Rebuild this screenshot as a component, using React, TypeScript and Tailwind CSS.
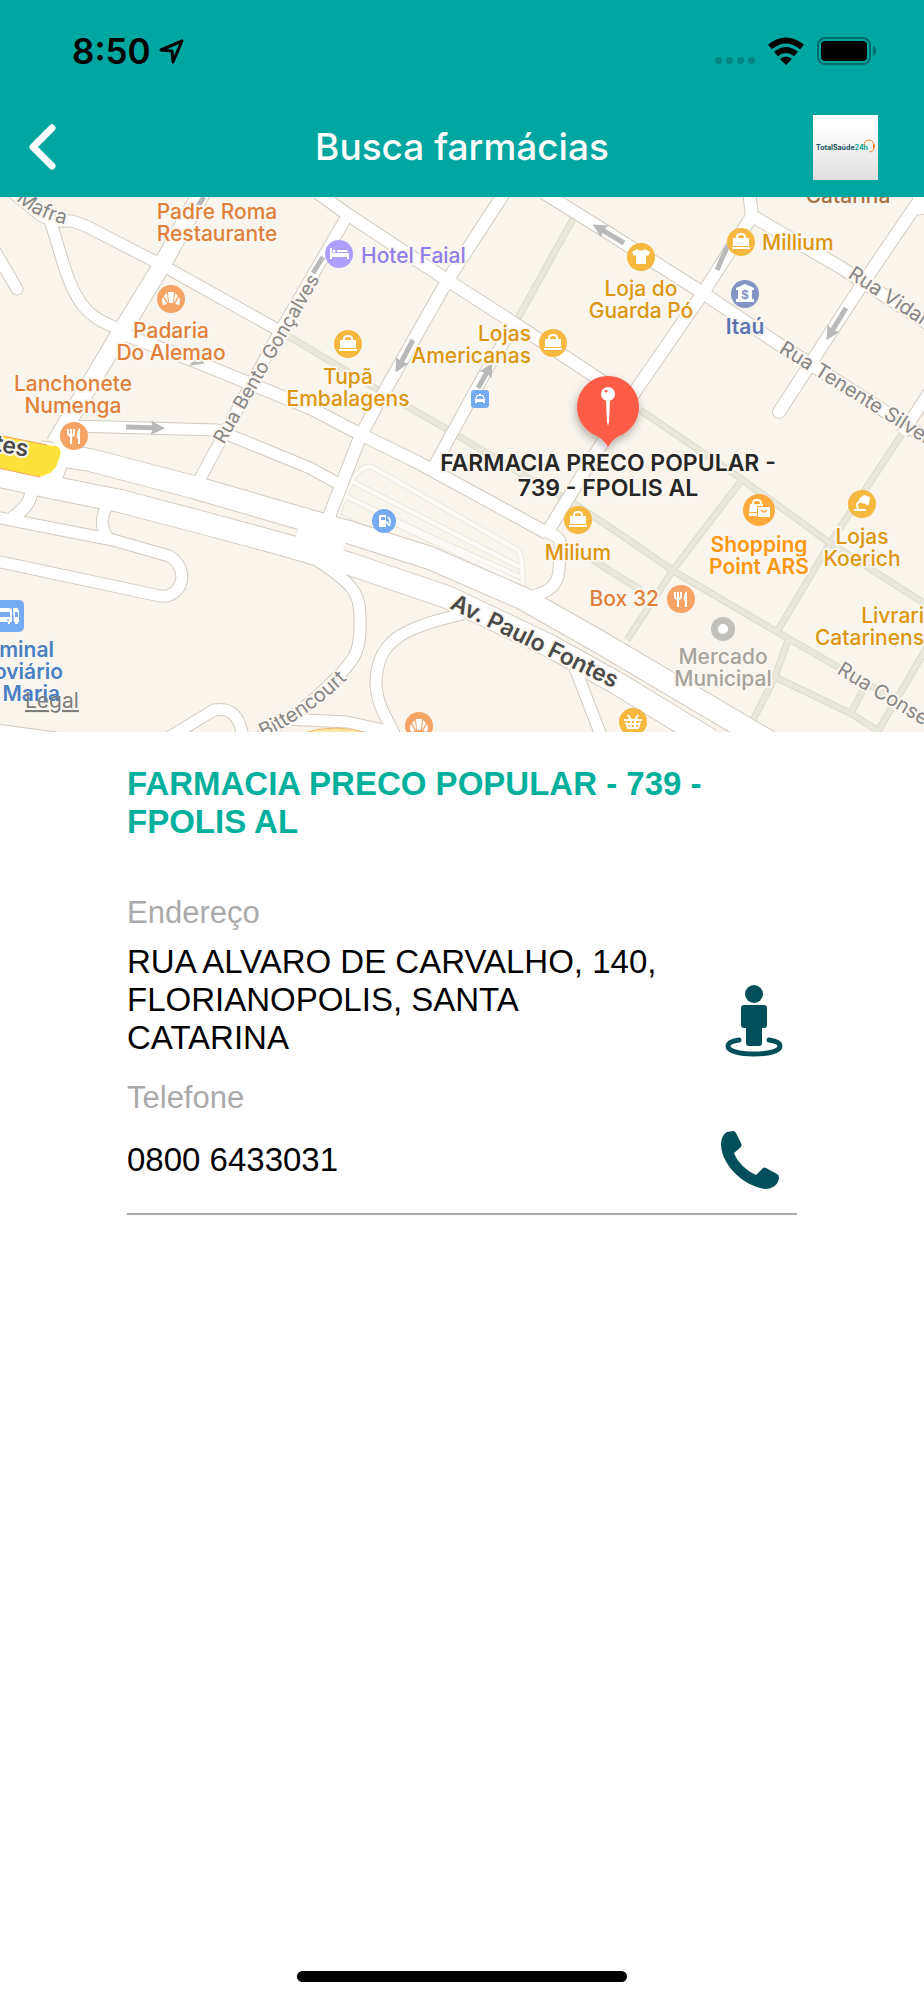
import React from 'react';

const roads = [
  { d: 'M203 190 L162 265 L118 337 L55 443', w: 17 },
  { d: 'M55 443 L60 460 L50 487', w: 17 },
  { d: 'M10 190 L40 215 L52 221 L72 221 L86 226 L160 264 L280 331', w: 11 },
  { d: 'M50 221 C60 248 66 285 84 307 C94 319 104 322 120 330', w: 11 },
  { d: 'M-4 253 L17 289', w: 11, round: true },
  { d: 'M120 333 L197 362 L310 408 L362 435 L417 462 L547 533', w: 12 },
  { d: 'M74 426 L217 430 L310 468 L337 483', w: 11 },
  { d: 'M346 218 L278 335 L197 484', w: 11 },
  { d: 'M318 193 L347 214 L447 280 L517 325 L614 389', w: 12 },
  { d: 'M506 190 L447 281 L378 403 L360 437 L327 522', w: 12 },
  { d: 'M516 323 L490 364 L434 466', w: 11 },
  { d: 'M544 193 L610 234 L703 293 L777 343 L930 440', w: 12 },
  { d: 'M749 190 L752 216 L703 293 L638 387 L587 467 L547 533', w: 12 },
  { d: 'M752 216 L840 267 L930 325', w: 12 },
  { d: 'M932 182 L863 283 L779 412', w: 12, round: true },
  { d: 'M914 206 L932 203', w: 18 },
  { d: 'M932 388 L902 434', w: 11 },
  { d: 'M547 532 C563 538 560 542 560 550 L559 570 C558 588 545 594 522 599', w: 11 },
  { d: 'M40 452 L90 460 L193 487 L310 521 L345 531 L430 558 L522 598 L598 641 L752 732 L790 754', w: 22 },
  { d: 'M-4 475 L50 487 L120 501 L200 522 L285 545 L350 564 L447 597 L550 646 L615 682 L710 740', w: 22 },
  { d: 'M297 532 L345 545', w: 22 },
  { d: 'M32 490 C30 502 26 508 12 518', w: 12 },
  { d: 'M106 508 C101 518 100 527 108 538', w: 11 },
  { d: 'M-4 517 L113 540 L169 556 C192 570 181 599 160 596 L-4 561', w: 11 },
  { d: 'M318 561 C350 582 360 592 360 615 C361 650 358 658 330 684 C305 710 285 720 256 740', w: 11 },
  { d: 'M463 614 C400 628 376 642 376 685 C377 705 386 716 396 738', w: 11 },
  { d: 'M284 719 L347 722 L392 732', w: 11 },
  { d: 'M168 738 L214 710 C230 707 240 715 243 738', w: 11 },
  { d: 'M-4 730 L56 738', w: 11 },
  { d: 'M575 668 L602 738', w: 11 },
];

const paths = [
  'M284 334 L300 343 L375 388 L445 428 L520 473 L573 503 L620 534 L675 572 L777 632 L930 720',
  'M573 219 L517 320',
  'M640 410 L733 473 L830 543 L930 607',
  'M902 434 L830 543 L777 632',
  'M741 481 L673 570 L627 640',
  'M586 555 L610 571 L641 590',
  'M788 640 L775 677 L751 724',
  'M775 677 L850 713 L880 732',
  'M864 688 L851 713',
  'M930 642 L874 738',
];

const lanes = [
  'M336 518 L352 480 C358 471 364 465 372 467 L516 549 C522 552 521 560 522 566 L523 590',
  'M353 482 L520 567',
  'M347 497 L420 532 L520 577',
  'M337 515 L372 532',
  'M388 520 L520 583',
];

const arrows = [
  { x: 126, y: 427, x2: 160, y2: 428 },
  { x: 413, y: 340, x2: 398, y2: 368 },
  { x: 478, y: 388, x2: 490, y2: 367 },
  { x: 624, y: 243, x2: 597, y2: 227 },
  { x: 846, y: 308, x2: 829, y2: 336 },
  { x: 185, y: 357, x2: 200, y2: 362 },
];

type Label = {
  x: number;
  y: number;
  lines: string[];
  color: string;
  anchor?: 'start' | 'middle' | 'end';
  bold?: boolean;
};

const ORANGE = '#e0803a';
const GOLD = '#dc960f';

const labels: Label[] = [
  { x: 217, y: 219, lines: ['Padre Roma', 'Restaurante'], color: ORANGE },
  { x: 171, y: 338, lines: ['Padaria', 'Do Alemao'], color: ORANGE },
  { x: 73, y: 391, lines: ['Lanchonete', 'Numenga'], color: ORANGE },
  { x: 348, y: 384, lines: ['Tupã', 'Embalagens'], color: GOLD },
  { x: 361, y: 263, lines: ['Hotel Faial'], color: '#8f7ee8', anchor: 'start' },
  { x: 531, y: 341, lines: ['Lojas', 'Americanas'], color: GOLD, anchor: 'end' },
  { x: 641, y: 296, lines: ['Loja do', 'Guarda Pó'], color: GOLD },
  { x: 762, y: 250, lines: ['Millium'], color: GOLD, anchor: 'start' },
  { x: 745, y: 334, lines: ['Itaú'], color: '#5a74b2', bold: true },
  { x: 848, y: 203, lines: ['Catarina'], color: '#a9713f' },
  { x: 578, y: 560, lines: ['Milium'], color: GOLD },
  { x: 759, y: 552, lines: ['Shopping', 'Point ARS'], color: '#fd9610', bold: true },
  { x: 862, y: 544, lines: ['Lojas', 'Koerich'], color: GOLD },
  { x: 659, y: 606, lines: ['Box 32'], color: ORANGE, anchor: 'end' },
  { x: 924, y: 623, lines: ['Livrari', 'Catarinens'], color: GOLD, anchor: 'end' },
  { x: 723, y: 664, lines: ['Mercado', 'Municipal'], color: '#a5a39d' },
  { x: 54, y: 657, lines: ['minal'], color: '#4a7fc3', anchor: 'end', bold: true },
  { x: 63, y: 679, lines: ['oviário'], color: '#4a7fc3', anchor: 'end', bold: true },
  { x: 60, y: 701, lines: ['Maria'], color: '#4a7fc3', anchor: 'end', bold: true },
];

const Bag = () => (
  <>
    <path d="M-4 -3 V-5 Q-4 -8 0 -8 Q4 -8 4 -5 V-3" fill="none" stroke="#fff" strokeWidth="2" />
    <path d="M-8 -4 H8 V4 H-8 Z M-9 5 H9 V7 H-9 Z" fill="#fff" />
  </>
);

const Cutlery = () => (
  <>
    <path d="M-6 -7 V-3 Q-6 0 -3 0 Q0 0 0 -3 V-7 M-3 -7 V8" fill="none" stroke="#fff" strokeWidth="2" />
    <path d="M6 -8 Q2 -5 3 2 H4 V8 H6 Z" fill="#fff" />
  </>
);

const Croissant = () => (
  <>
    <path d="M-3 -7 H3 L2 4 H-2 Z" fill="#fff" />
    <path d="M-4 -6 L-7 -3 L-3 4 Z M4 -6 L7 -3 L3 4 Z" fill="#fff" />
    <path d="M-8 -2 Q-10 2 -8 6 L-4 5 Z M8 -2 Q10 2 8 6 L4 5 Z" fill="#fff" />
  </>
);

type PoiProps = { x: number; y: number; color: string; r?: number; children: React.ReactNode };

const Poi: React.FC<PoiProps> = ({ x, y, color, r = 14, children }) => (
  <g transform={`translate(${x} ${y})`}>
    <circle r={r} fill={color} />
    {children}
  </g>
);

const Map = () => {
  const halo = { stroke: '#fbf7f0', strokeWidth: 4, paintOrder: 'stroke', strokeLinejoin: 'round' } as const;
  return (
    <svg viewBox="0 197 924 535" className="block w-full h-auto bg-[#f9f5ed] font-['Inter',sans-serif]" role="img" aria-label="Mapa">
      <defs>
        <marker id="head" viewBox="0 0 14 14" refX="9" refY="7" markerWidth="14" markerHeight="14" markerUnits="userSpaceOnUse" orient="auto">
          <path d="M0 0 L14 7 L0 14 L2 7 Z" fill="#b9b9b9" />
        </marker>
        <filter id="shadow" x="-50%" y="-50%" width="200%" height="200%">
          <feDropShadow dx="-1" dy="4" stdDeviation="4" floodOpacity="0.3" />
        </filter>
        <path id="mafra" d="M16 200 Q40 222 80 227" />
        <path id="bittencourt" d="M263 738 Q316 714 362 664" />
      </defs>

      {/* streets */}
      <g fill="none">
        {paths.map((d) => <path key={d} d={d} stroke="#dcdbca" strokeWidth="7" />)}
        {paths.map((d) => <path key={d} d={d} stroke="#e9e8dc" strokeWidth="5" />)}
        {lanes.map((d) => <path key={d} d={d} stroke="#e9e6de" strokeWidth="6" />)}
        {lanes.map((d) => <path key={d} d={d} stroke="#fcfaf6" strokeWidth="4" />)}
        {roads.map((r) => (
          <path key={r.d} d={r.d} stroke="#d3cabf" strokeWidth={r.w + 2} strokeLinejoin="round" strokeLinecap={r.round ? 'round' : 'butt'} />
        ))}
        {roads.map((r) => (
          <path key={r.d} d={r.d} stroke="#fff" strokeWidth={r.w} strokeLinejoin="round" strokeLinecap={r.round ? 'round' : 'butt'} />
        ))}
      </g>
      <path d="M-2 435 L47 445 L56 446 Q62 448 60 456 L56 467 L50 473 L40 477 L-2 468 Z" fill="#ffe13c" />
      <path d="M-2 435 L47 445 M40 477 L-2 468" stroke="#fba060" strokeWidth="1" />
      <path d="M300 734 Q335 722 370 734" fill="#ffe7a8" stroke="#f6b76a" />

      <g stroke="#b9b9b9" strokeWidth="5">
        {arrows.map((a) => (
          <line key={a.x} x1={a.x} y1={a.y} x2={a.x2} y2={a.y2} markerEnd="url(#head)" />
        ))}
        <path d="M728 245 L717 270 M323 257 L313 273 M204 197 L198 206" />
      </g>

      {/* street names */}
      <g fontSize="20" fill="#858585" {...halo}>
        <text><textPath href="#mafra">Mafra</textPath></text>
        <text><textPath href="#bittencourt">Bittencourt</textPath></text>
        <text fontSize="19" transform="translate(224 445) rotate(-60)">Rua Bento Gonçalves</text>
        <text transform="translate(847 277) rotate(33)">Rua Vidal</text>
        <text transform="translate(778 352) rotate(32)">Rua Tenente Silvei</text>
        <text transform="translate(836 673) rotate(31)">Rua Conse</text>
      </g>
      <g fontSize="23" fontWeight="600" fill="#4a4a4a" {...halo}>
        <text transform="translate(449 608) rotate(26)">Av. Paulo Fontes</text>
        <text transform="translate(27 457) rotate(11)" textAnchor="end">tes</text>
      </g>

      {/* places */}
      {labels.map((l) => (
        <text key={`${l.x}-${l.y}`} fontSize="21" fontWeight={l.bold ? 600 : 500} fill={l.color} textAnchor={l.anchor ?? 'middle'} {...halo}>
          {l.lines.map((line, i) => (
            <tspan key={line} x={l.x} y={l.y + i * 22}>{line}</tspan>
          ))}
        </text>
      ))}

      <Poi x={171} y={299} color="#f6a465"><Croissant /></Poi>
      <Poi x={419} y={726} color="#f6a465"><Croissant /></Poi>
      <Poi x={74} y={436} color="#f6a465"><Cutlery /></Poi>
      <Poi x={681} y={599} color="#f6a465"><Cutlery /></Poi>
      <Poi x={348} y={344} color="#f6b83f"><Bag /></Poi>
      <Poi x={553} y={343} color="#f6b83f"><Bag /></Poi>
      <Poi x={741} y={242} color="#f6b83f"><Bag /></Poi>
      <Poi x={578} y={520} color="#f6b83f"><Bag /></Poi>
      <Poi x={339} y={254} color="#ae9fff">
        <path d="M-8 -6 V5 M-8 2 H9 M9 5 V-1" stroke="#fff" strokeWidth="2" fill="none" />
        <path d="M-7 -1 H10 V2 H-7 Z M-2 -4 H7 Q9 -4 9 -2 H-2 Z" fill="#fff" />
        <circle cx="-5" cy="-3" r="1.5" fill="#fff" />
      </Poi>
      <Poi x={641} y={257} color="#f6b83f">
        <path d="M-4 -8 Q0 -5 4 -8 L9 -5 L7 -1 L5 -2 V7 H-5 V-2 L-7 -1 L-9 -5 Z" fill="#fff" />
      </Poi>
      <Poi x={745} y={294} color="#8595c3">
        <path d="M0 -10 L9 -6 V-4 H7 V5 H9 V8 H-9 V5 H-7 V-4 H-9 V-6 Z" fill="#fff" />
        <text y="5" textAnchor="middle" fontSize="12" fontWeight="700" fill="#8595c3">$</text>
      </Poi>
      <Poi x={384} y={521} color="#75abf0" r={12}>
        <path d="M-5 -6 H2 V6 H-5 Z" fill="#fff" />
        <path d="M-3 -4 H1 V-1 H-3 Z" fill="#75abf0" />
        <path d="M2 1 Q4 1 4 3 Q6 6 6 2 V-1 L4 -4" stroke="#fff" strokeWidth="1.5" fill="none" />
      </Poi>
      <Poi x={759} y={510} color="#feab3c" r={16}>
        <path d="M-6 -5 V-7 Q-6 -10 -2 -10 Q2 -10 2 -7 V-5" stroke="#fff" strokeWidth="2" fill="none" />
        <path d="M-9 -6 H4 V-4 H-2 V2 H-10 Z M-10 3 H-2 V6 H-10 Z M-1 -3 H11 V7 H-1 Z" fill="#fff" />
        <path d="M2 0 Q5 4 8 0" stroke="#feab3c" strokeWidth="1.5" fill="none" />
      </Poi>
      <Poi x={862} y={504} color="#f6b83f">
        <path d="M-3 -5 L2 -9 L8 -7 L7 0 L5 2 L4 0 L-1 -1 Z" fill="#fff" />
        <path d="M-1 -4 L-5 0 L-4 6 M-8 6 H4" stroke="#fff" strokeWidth="2" fill="none" />
      </Poi>
      <Poi x={633} y={722} color="#f6b83f">
        <path d="M-9 -2 H9 M-7 0 L-5 6 H5 L7 0 M-5 -7 L-2 -2 M5 -7 L2 -2 M-7 2 H7 M-2 -2 V6 M2 -2 V6" stroke="#fff" strokeWidth="2" fill="none" />
      </Poi>
      <Poi x={723} y={629} color="#c2c0ba" r={12}><circle r="5" fill="#fff" /></Poi>

      {/* transit stops */}
      <g transform="translate(480 399)">
        <rect x="-9" y="-9" width="18" height="18" rx="3" fill="#75abf0" />
        <path d="M-1 -5 H1 V-4 H3 L5 0 V4 H3 V3 H-3 V4 H-5 V0 L-3 -4 H-1 Z" fill="#fff" />
        <path d="M-2 -3 H2 L4 0 H-4 Z" fill="#75abf0" />
      </g>
      <g transform="translate(0 616)">
        <rect x="-8" y="-16" width="32" height="32" rx="5" fill="#75abf0" />
        <path d="M-2 -8 H9 Q12 -8 12 -5 V6 H10 V8 H8 V6 H0 V8 H-2 Z M13 -8 H17 Q19 -7 19 -4 V6 H18 V8 H15 V6 H14 Z" fill="#fff" />
        <path d="M-2 -4 H10 V1 H-2 Z M15 -4 H18 V1 H15 Z" fill="#75abf0" />
        <circle cx="8" cy="4" r="1" fill="#75abf0" />
      </g>

      {/* selected pharmacy */}
      <path d="M608 447 Q604 440 597 436 A31 31 0 1 1 619 436 Q612 440 608 447 Z" fill="#ff5b47" filter="url(#shadow)" />
      <path d="M606 401 H610 L609 422 L608 426 L607 422 Z" fill="#fff" />
      <circle cx="608" cy="394" r="7" fill="#fff" />
      <circle cx="606" cy="391" r="1.5" fill="#ff5b47" />
      <text fontSize="23" fontWeight="600" fill="#262626" textAnchor="middle" {...halo}>
        <tspan x="608" y="471">FARMACIA PRECO POPULAR -</tspan>
        <tspan x="608" y="496">739 - FPOLIS AL</tspan>
      </text>

      <a href="#legal">
        <text x="25" y="708" fontSize="21" fill="#7d7d7d" textDecoration="underline">Legal</text>
      </a>
    </svg>
  );
};

const StatusBar = () => (
  <div className="flex items-center justify-between h-[102px] pl-[72px] pr-12 text-black">
    <div className="flex items-center gap-2">
      <span className="text-[35px] leading-10 font-semibold">8:50</span>
      <svg width="25" height="25" viewBox="0 0 25 25" fill="none" stroke="currentColor" strokeWidth="3" strokeLinejoin="round">
        <path d="M2 11 L23 2 L14 23 L13 12 Z" />
      </svg>
    </div>
    <div className="flex items-center gap-3">
      <div className="flex gap-1 pt-[18px]">
        <span className="size-[7px] rounded-sm bg-[#008580]" />
        <span className="size-[7px] rounded-sm bg-[#008580]" />
        <span className="size-[7px] rounded-sm bg-[#008580]" />
        <span className="size-[7px] rounded-sm bg-[#008580]" />
      </div>
      <svg width="38" height="28" viewBox="0 0 38 28" fill="none" stroke="currentColor" strokeWidth="6">
        <path d="M3 10 Q19 -3 35 10" />
        <path d="M9 17 Q19 9 29 17" />
        <path d="M13 22 Q19 17 25 22 L19 28 Z" fill="currentColor" stroke="none" />
      </svg>
      <svg width="59" height="28" viewBox="0 0 59 28">
        <rect x="1" y="1" width="52" height="26" rx="7" fill="none" stroke="#006c69" strokeWidth="2" />
        <rect x="4" y="4" width="46" height="20" rx="4" fill="#000" />
        <path d="M56 9 Q59 10 59 14 Q59 18 56 19 Z" fill="#006c69" />
      </svg>
    </div>
  </div>
);

const Logo = () => (
  <svg width="65" height="65" viewBox="0 0 65 65" className="bg-linear-to-b from-white from-20% to-[#dfdfdf]" role="img" aria-label="Total Saúde 24h">
    <text x="3" y="35" fontSize="7" fontWeight="700" fill="#17505e" className="font-['Inter',sans-serif]">
      TotalSaúde<tspan fill="#00a08f">24h</tspan>
    </text>
    <path d="M51 31 Q51 25 56 25 Q61 25 61 32 M61 34 Q60 37 56 37" fill="none" stroke="#ee8a3a" strokeWidth="1" />
    <path d="M60 29 Q62 29 62 31 Q62 34 60 34 Z" fill="#ee7a20" />
  </svg>
);

const App: React.FC = () => {
  return (
    <div className="flex flex-col min-h-screen bg-white font-['Liberation_Sans',sans-serif]">
      <header className="bg-[#00a6a0] font-['Inter',sans-serif]">
        <StatusBar />
        <div className="grid grid-cols-[1fr_auto_1fr] items-center h-[95px] px-7 pb-[5px]">
          <button type="button" aria-label="Voltar" className="justify-self-start text-white">
            <svg width="30" height="48" viewBox="0 0 30 48" fill="none" stroke="currentColor" strokeWidth="7" strokeLinecap="round" strokeLinejoin="round">
              <path d="M24 5 L5 24 L24 43" />
            </svg>
          </button>
          <h1 className="text-[37px] leading-10 font-medium text-white">Busca farmácias</h1>
          <div className="justify-self-end pr-[18px]">
            <Logo />
          </div>
        </div>
      </header>

      <Map />

      <main className="px-[127px] pt-[33px]">
        <h2 className="text-[33px] leading-[38px] font-bold text-[#00b09c]">FARMACIA PRECO POPULAR - 739 - FPOLIS AL</h2>

        <section className="pt-[54px]">
          <h3 className="text-[31px] leading-9 text-[#aaaaaa]">Endereço</h3>
          <div className="flex items-end justify-between pt-3">
            <p className="w-[560px] text-[33px] leading-[38px] text-black">RUA ALVARO DE CARVALHO, 140, FLORIANOPOLIS, SANTA CATARINA</p>
            <button type="button" aria-label="Ver no mapa" className="pr-[14px] text-[#004f5a]">
              <svg width="58" height="72" viewBox="0 0 58 72" fill="currentColor">
                <circle cx="29" cy="9" r="9" />
                <path d="M19 20 H39 Q42 20 42 23 V40 Q42 43 39 43 H37 V58 Q37 61 34 61 H24 Q21 61 21 58 V43 H19 Q16 43 16 40 V23 Q16 20 19 20 Z" />
                <path d="M14 55 C7 56 3 58 3 61 C3 66 14 69 29 69 C44 69 55 66 55 61 C55 58 51 56 44 55" fill="none" stroke="currentColor" strokeWidth="5" strokeLinecap="round" />
              </svg>
            </button>
          </div>
        </section>

        <section className="pt-[23px] pb-6 border-b-2 border-[#a9a9a9]">
          <h3 className="text-[31px] leading-9 text-[#aaaaaa]">Telefone</h3>
          <div className="flex items-center justify-between pt-[15px]">
            <p className="text-[33px] leading-[38px] text-black">0800 6433031</p>
            <button type="button" aria-label="Ligar" className="pr-[18px] text-[#004f5a]">
              <svg width="58" height="58" viewBox="0 0 58 58" fill="currentColor">
                <path d="M6 1 L12 0 Q14 0 15 2 L20 12 Q21 14 20 16 L13 22 C16 31 26 40 35 44 L42 37 Q43 36 45 37 L56 43 Q58 44 58 46 C58 54 51 58 44 58 C23 55 1 35 0 14 C0 8 2 3 6 1 Z" />
              </svg>
            </button>
          </div>
        </section>
      </main>

      <div className="mt-auto mb-[18px] mx-auto w-[330px] h-[11px] rounded-full bg-black" />
    </div>
  );
};

export default App;
